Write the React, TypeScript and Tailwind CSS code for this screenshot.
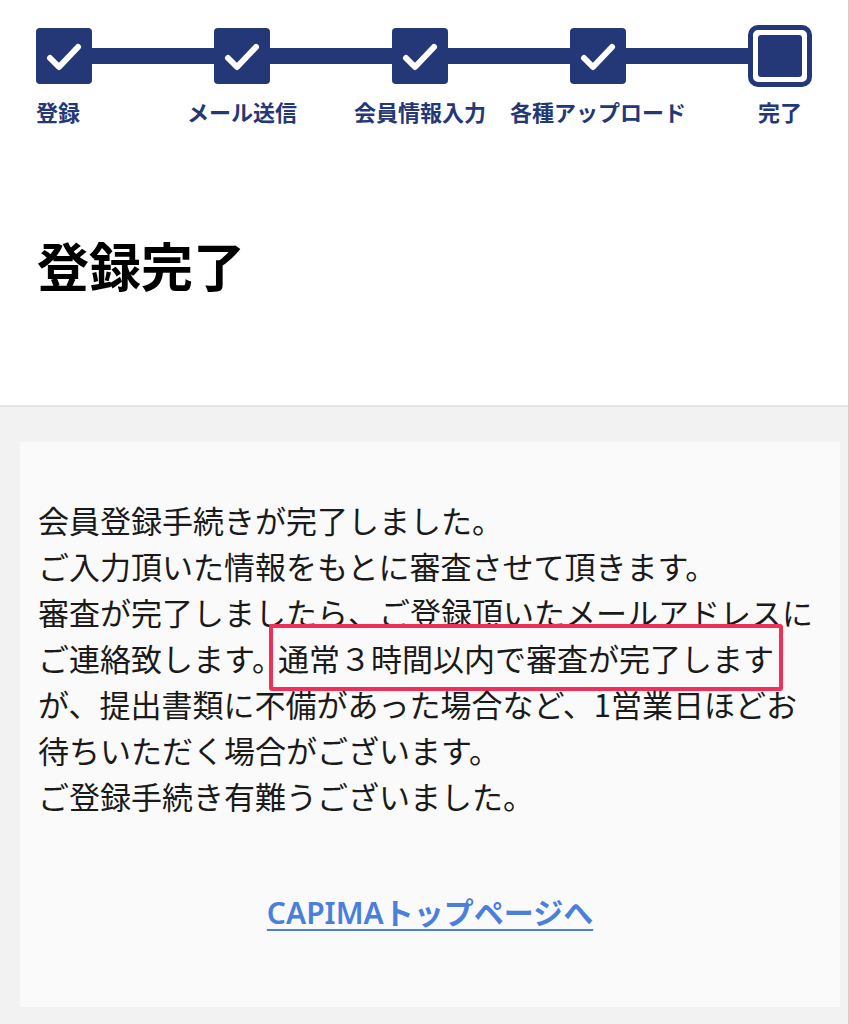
const steps = [
  { label: "登録", align: "items-start" },
  { label: "メール送信", align: "items-center" },
  { label: "会員情報入力", align: "items-center" },
  { label: "各種アップロード", align: "items-center" },
] as const;

function CheckBox() {
  return (
    <div className="w-[56px] h-[56px] rounded-[4px] bg-[#243878] flex items-center justify-center">
      <svg width="56" height="56" viewBox="0 0 56 56" fill="none">
        <polyline
          points="14,30 23,39 42,19"
          stroke="#ffffff"
          strokeWidth="6"
          strokeLinecap="round"
          strokeLinejoin="round"
        />
      </svg>
    </div>
  );
}

function CurrentBox() {
  return (
    <div className="w-[64px] h-[62px] rounded-[10px] border-[5px] border-[#243878] bg-white p-[5px]">
      <div className="w-full h-full rounded-[3px] bg-[#243878]" />
    </div>
  );
}

function Line() {
  return (
    <div className="flex-1 h-[64px] flex items-center">
      <div className="w-full h-[16px] bg-[#243878]" />
    </div>
  );
}

function Step({ label, align, last }: { label: string; align: string; last?: boolean }) {
  return (
    <div className={`flex flex-col ${align} ${last ? "w-[64px]" : "w-[56px]"}`}>
      <div className="h-[64px] flex items-center">{last ? <CurrentBox /> : <CheckBox />}</div>
      <div className="mt-[9px] whitespace-nowrap text-[22px] leading-[28px] font-bold text-[#243878]">
        {label}
      </div>
    </div>
  );
}

export default function App() {
  return (
    <div
      className="min-h-[1024px] bg-white border-r border-[#cfcfcf] flex flex-col"
      style={{ fontFamily: '"Noto Sans CJK JP", "Noto Sans", sans-serif' }}
    >
      <div className="px-[36px] pt-[24px] pr-[36px]">
        <div className="flex items-start">
          {steps.map((s) => (
            <div key={s.label} className="contents">
              <Step label={s.label} align={s.align} />
              <Line />
            </div>
          ))}
          <Step label="完了" align="items-center" last />
        </div>
      </div>

      <h1 className="mt-[114px] mb-[114px] px-[37px] text-[52px] leading-none font-bold text-black">
        登録完了
      </h1>

      <section className="flex-1 border-t-2 border-[#e6e6e6] bg-[#f2f2f2] pt-[35px] pb-[16px] pl-[20px] pr-[8px]">
        <div className="bg-[#fafafa] pt-[55px] pb-[74px] px-[18px]">
          <p className="text-[31px] leading-[46px] text-[#1a1a1a] whitespace-nowrap">
            会員登録手続きが完了しました。
            <br />
            ご入力頂いた情報をもとに審査させて頂きます。
            <br />
            審査が完了しましたら、ご登録頂いたメールアドレスに
            <br />
            ご連絡致します。
            <span className="ml-[-14px] border-[4px] border-[#ef3058] rounded-[3px] px-[5px] py-[7px]">
              通常３時間以内で審査が完了します
            </span>
            <br />
            が、提出書類に不備があった場合など、1営業日ほどお
            <br />
            待ちいただく場合がございます。
            <br />
            ご登録手続き有難うございました。
          </p>
          <div className="mt-[74px] text-center">
            <a
              href="#"
              className="text-[30px] leading-[40px] font-semibold text-[#4a7fdb] underline underline-offset-[5px] decoration-2"
              style={{ fontFamily: '"Noto Sans", "Noto Sans CJK JP", sans-serif' }}
            >
              CAPIMAトップページへ
            </a>
          </div>
        </div>
      </section>
    </div>
  );
}
